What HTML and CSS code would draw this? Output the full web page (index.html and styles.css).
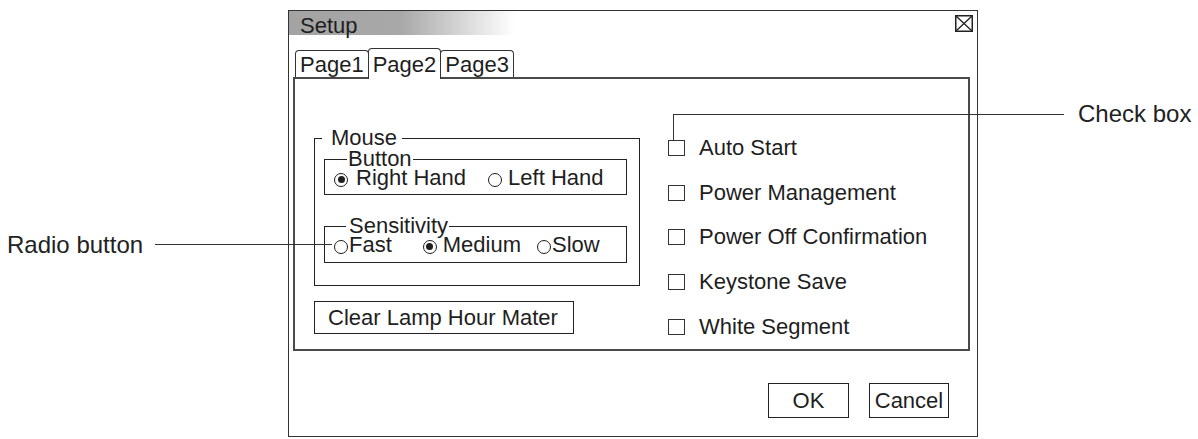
FILE: index.html
```html
<!DOCTYPE html>
<html lang="en">
<head>
<meta charset="utf-8">
<title>Setup</title>
<link rel="stylesheet" href="styles.css">
</head>
<body>
<div class="figure">
  <div class="dialog">
    <div class="titlebar">
      <span class="title">Setup</span>
      <svg class="close" width="18" height="17" viewBox="0 0 18 17" aria-hidden="true">
        <rect x="0.75" y="0.75" width="16.5" height="15.5" fill="none" stroke="#222" stroke-width="1.5"/>
        <path d="M1 1 L17 16 M17 1 L1 16" stroke="#222" stroke-width="1.3" fill="none"/>
      </svg>
    </div>
    <div class="tabs">
      <div class="tab">Page1</div>
      <div class="tab tab--active">Page2</div>
      <div class="tab">Page3</div>
    </div>
    <div class="panel">
      <div class="col-left">
        <fieldset class="group group--mouse">
          <legend class="legend legend--mouse">Mouse</legend>
          <fieldset class="group group--sub group--button">
            <legend class="legend legend--button">Button</legend>
            <div class="radio-row">
              <label class="radio radio--wide"><span class="radio-mark radio-mark--on"></span>Right Hand</label>
              <label class="radio radio--left-hand"><span class="radio-mark"></span>Left Hand</label>
            </div>
          </fieldset>
          <fieldset class="group group--sub group--sens">
            <legend class="legend legend--sens">Sensitivity</legend>
            <div class="radio-row">
              <label class="radio radio--snug"><span class="radio-mark"></span>Fast</label>
              <label class="radio radio--medium"><span class="radio-mark radio-mark--on"></span>Medium</label>
              <label class="radio radio--snug radio--slow"><span class="radio-mark"></span>Slow</label>
            </div>
          </fieldset>
        </fieldset>
        <button class="btn btn--clear" type="button">Clear Lamp Hour Mater</button>
      </div>
      <div class="checks">
        <label class="check"><span class="check-box"></span>Auto Start</label>
        <label class="check"><span class="check-box"></span>Power Management</label>
        <label class="check"><span class="check-box"></span>Power Off Confirmation</label>
        <label class="check"><span class="check-box"></span>Keystone Save</label>
        <label class="check"><span class="check-box"></span>White Segment</label>
      </div>
    </div>
    <div class="footer">
      <button class="btn btn--ok" type="button">OK</button>
      <button class="btn btn--cancel" type="button">Cancel</button>
    </div>
  </div>

  <div class="callout callout--radio">
    <span class="callout-label">Radio button</span>
    <span class="callout-line"></span>
  </div>
  <div class="callout callout--check">
    <span class="callout-elbow"></span>
    <span class="callout-label callout-label--right">Check box</span>
  </div>
</div>
</body>
</html>
```

FILE: styles.css
```css
* {
  box-sizing: border-box;
}

html, body {
  margin: 0;
  padding: 0;
  background: #ffffff;
}

body {
  font-family: "Liberation Sans", Arial, sans-serif;
  color: #1e1e1e;
}

.figure {
  position: relative;
  width: 1198px;
  height: 439px;
  padding: 10px 0 0 288px;
  overflow: hidden;
}

/* ---------- dialog ---------- */
.dialog {
  width: 690px;
  border: 1px solid #333;
  font-size: 22px;
  line-height: 22px;
  background: #fff;
}

.titlebar {
  display: flex;
  align-items: flex-start;
  height: 24px;
  background: linear-gradient(to right, #a3a3a3 0, #a8a8a8 112px, #ffffff 226px);
}

.title {
  padding: 6px 0 0 11px;
  line-height: 18px;
}

.close {
  display: block;
  margin: 4px 4px 0 auto;
}

/* ---------- tabs ---------- */
.tabs {
  position: relative;
  z-index: 1;
  display: flex;
  align-items: flex-end;
  margin: 13px 0 -2px 0;
  padding-left: 6px;
}

.tab {
  background: #fff;
  border: 1px solid #333;
  border-bottom: none;
  border-radius: 4px 4px 0 0;
  padding: 2.5px 4px 1.5px 4px;
  margin-bottom: 2px;
  line-height: 22px;
}

.tab + .tab {
  margin-left: -1px;
}

.tab--active {
  padding-top: 4.5px;
  padding-bottom: 3.5px;
  margin-bottom: 0;
}

/* ---------- panel ---------- */
.panel {
  display: flex;
  align-items: flex-start;
  height: 274px;
  margin: 0 7px 0 4px;
  border: 2px solid #4a4a4a;
  padding: 51px 0 0 19px;
}

.col-left {
  display: flex;
  flex-direction: column;
  align-items: flex-start;
}

.group {
  margin: 0;
  min-width: 0;
  border: 1px solid #222;
}

.group--mouse {
  width: 326px;
  padding: 0 12px 22px 9px;
}

.group--sub {
  padding: 0 0 5px 9px;
}

.group--button {
  margin-top: 5px;
}

.group--sens {
  margin-top: 23px;
  padding-bottom: 6px;
}

.legend {
  line-height: 16px;
  font-size: 22px;
}

.legend--mouse {
  margin-left: -2px;
  padding: 0 5px 0 9px;
}

.legend--button {
  margin-left: 13px;
  padding: 0 1px;
}

.legend--sens {
  margin-left: 12px;
  padding: 0 1px 0 3px;
}

.radio-row {
  display: flex;
  align-items: center;
  height: 22px;
}

.radio {
  display: flex;
  align-items: center;
  gap: 6px;
  white-space: nowrap;
}

.radio--wide {
  gap: 8px;
}

.radio--snug {
  gap: 1px;
}

.radio--left-hand {
  margin-left: 22px;
}

.radio--medium {
  margin-left: 31px;
}

.radio--slow {
  margin-left: 16px;
  gap: 1px;
}

.radio-mark {
  flex: none;
  display: grid;
  place-items: center;
  width: 14px;
  height: 14px;
  margin-top: 3px;
  border: 1.2px solid #1e1e1e;
  border-radius: 50%;
}

.radio-mark--on::after {
  content: "";
  width: 7px;
  height: 7px;
  border-radius: 50%;
  background: #1e1e1e;
}

.btn {
  font: inherit;
  line-height: 22px;
  color: inherit;
  background: #fff;
  border: 1px solid #222;
  border-radius: 0;
  margin: 0;
  cursor: default;
}

.btn--clear {
  margin-top: 15px;
  height: 33px;
  padding: 0 15px 0 13px;
  text-align: left;
}

.checks {
  display: flex;
  flex-direction: column;
  gap: 22.8px;
  padding-top: 6.75px;
  margin-left: 28px;
}

.check {
  display: flex;
  align-items: center;
  gap: 14px;
  white-space: nowrap;
}

.check-box {
  flex: none;
  width: 17px;
  height: 16px;
  border: 1.2px solid #333;
}

/* ---------- footer ---------- */
.footer {
  display: flex;
  justify-content: flex-end;
  gap: 20px;
  padding: 32px 28px 18px 0;
}

.btn--ok {
  width: 81px;
  height: 35px;
  padding: 0;
}

.btn--cancel {
  width: 80px;
  height: 35px;
  padding: 0;
}

/* ---------- callouts ---------- */
.callout {
  position: absolute;
  display: flex;
  color: #222;
}

.callout-label {
  font-size: 24px;
  line-height: 24px;
  white-space: nowrap;
}

.callout--radio {
  left: 7px;
  top: 232.5px;
  align-items: center;
}

.callout-line {
  width: 177px;
  height: 1px;
  margin-left: 12px;
  background: #333;
}

.callout--check {
  left: 673px;
  top: 102px;
  align-items: flex-start;
}

.callout-elbow {
  width: 391px;
  height: 26px;
  margin-top: 12px;
  border-top: 1px solid #333;
  border-left: 1px solid #333;
}

.callout-label--right {
  margin-left: 14px;
}
```
